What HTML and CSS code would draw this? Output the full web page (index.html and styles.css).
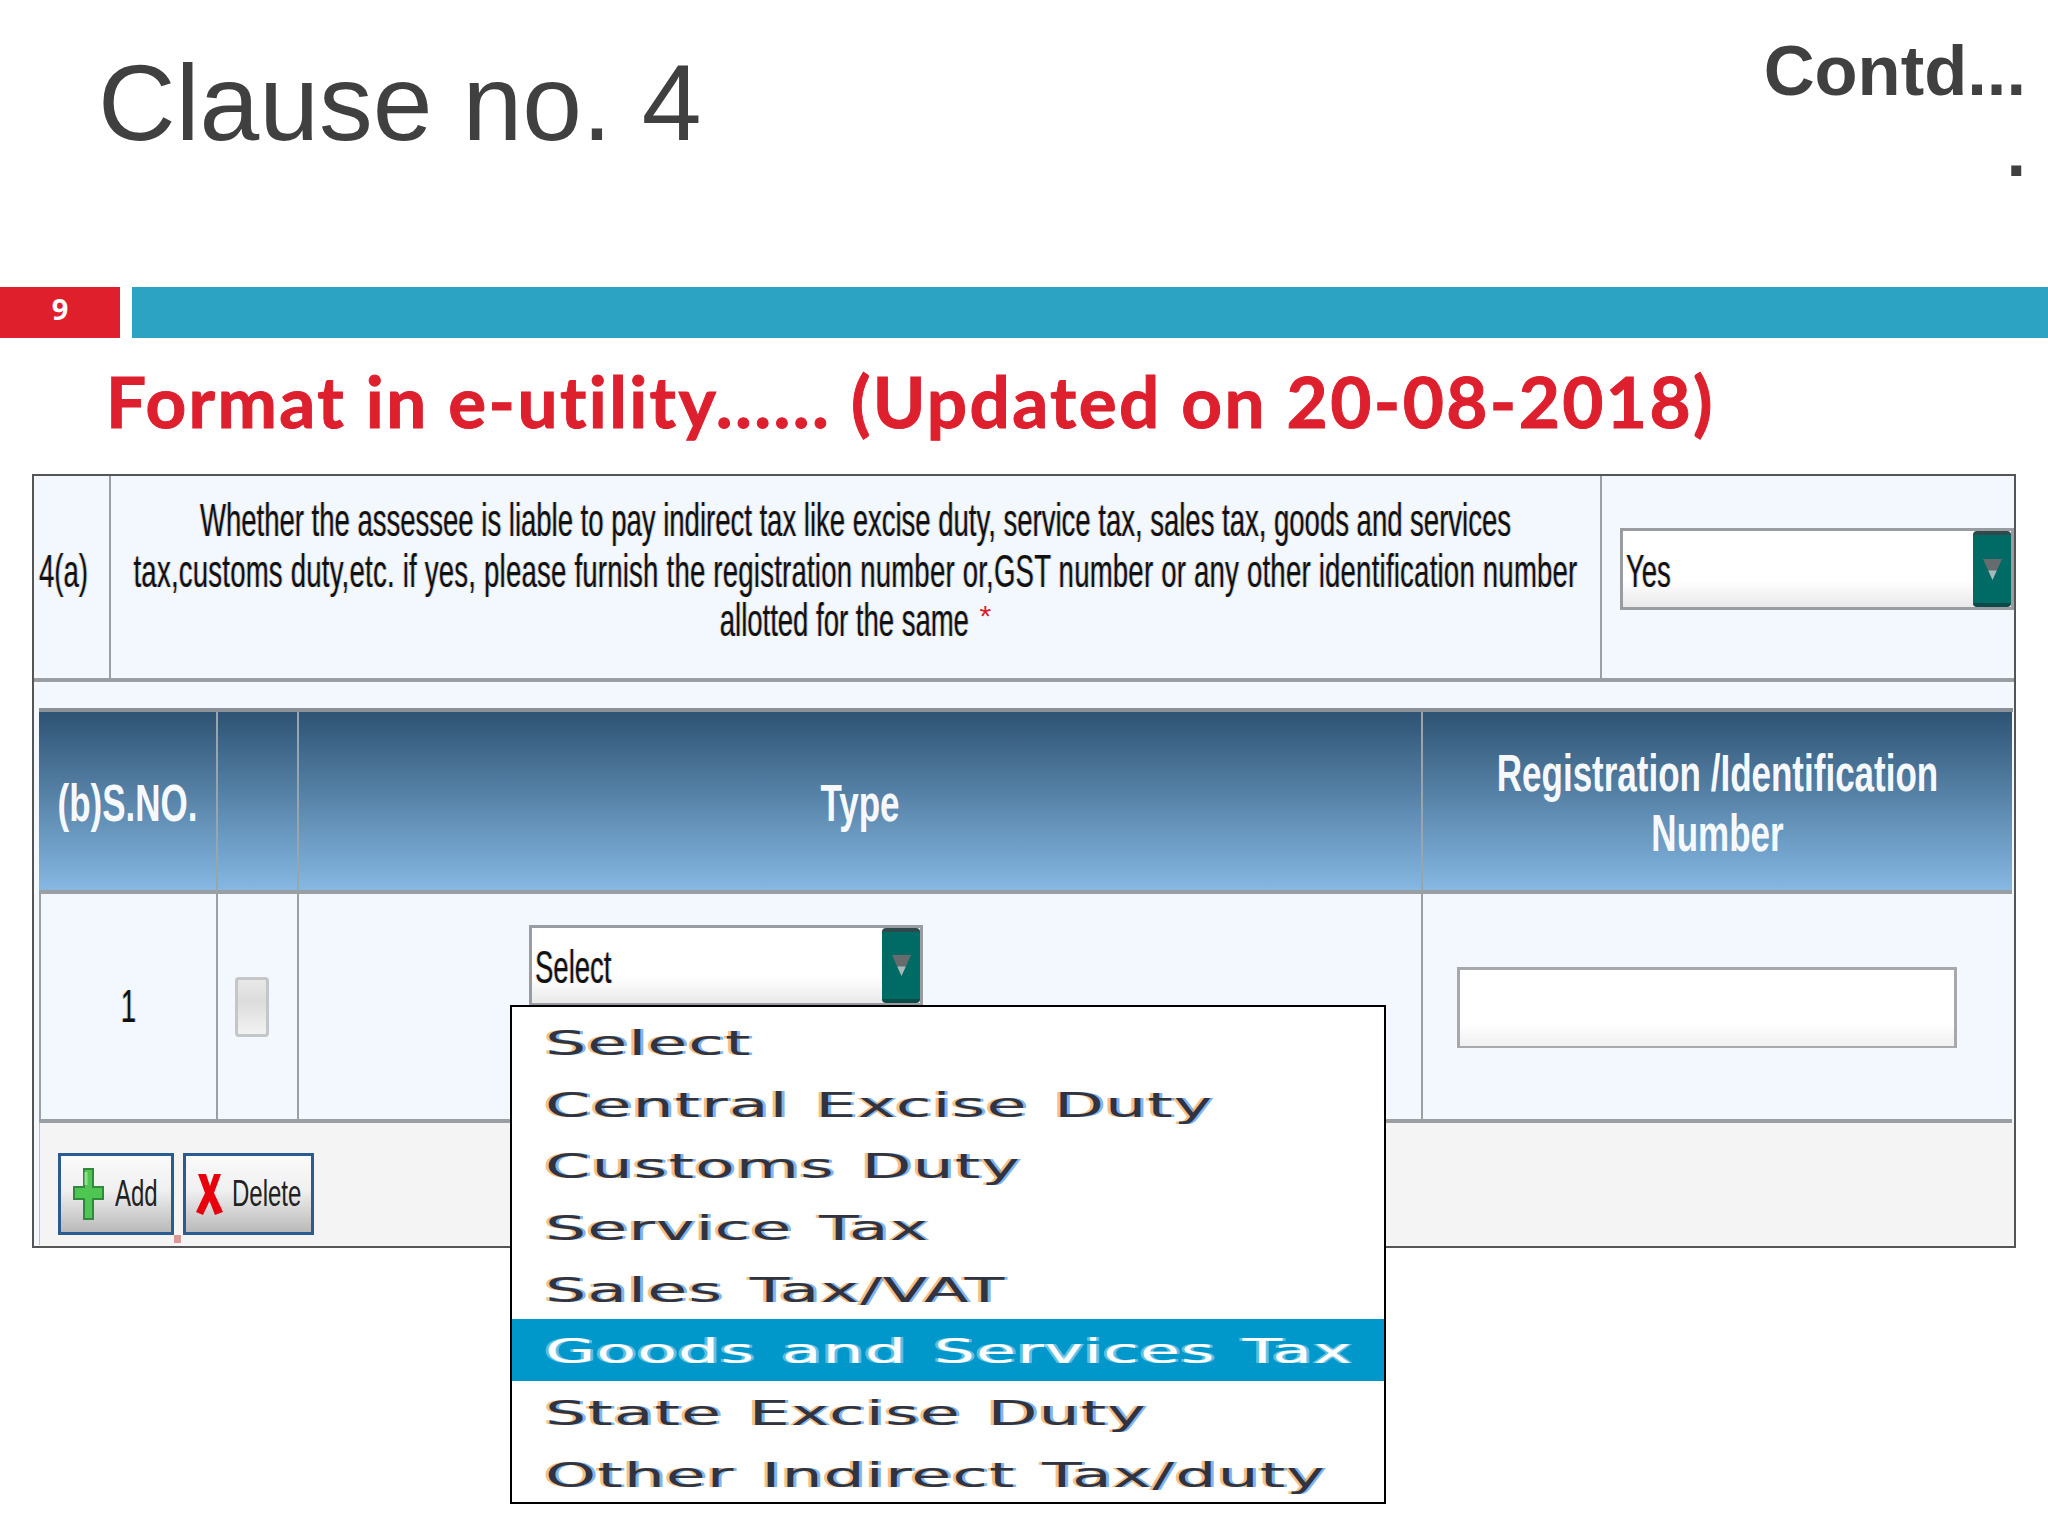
FILE: index.html
```html
<!DOCTYPE html>
<html lang="en">
<head>
<meta charset="utf-8">
<title>Clause no. 4</title>
<link rel="stylesheet" href="styles.css">
</head>
<body>
<header class="head">
  <h1 class="title">Clause no. 4</h1>
  <div class="contd">Contd...<br>.</div>
</header>
<div class="bar">
  <div class="num">9</div>
  <div class="band"></div>
</div>
<h2 class="sub">Format in e-utility...... (Updated on 20-08-2018)</h2>
<section class="form">
  <div class="row-a">
    <div class="cell-a cell-no"><span class="txt">4(a)</span></div>
    <div class="cell-a cell-q"><p class="txt question">Whether the assessee is liable to pay indirect tax like excise duty, service tax, sales tax, goods and services<br><span class="wide">tax,customs duty,etc. if yes, please furnish the registration number or,GST number or any other identification number</span><br>allotted for the same <sup class="req">*</sup></p></div>
    <div class="cell-a cell-sel">
      <div class="select select-yes">
        <span class="txt sel-label">Yes</span>
        <span class="arrow"><svg class="tri" viewBox="0 0 18 20"><path d="M0 0H18L9 20Z" fill="#666c6e"/><path d="M5 11H13L9 20Z" fill="#a5babc"/></svg></span>
      </div>
    </div>
  </div>
  <div class="gap"></div>
  <div class="grid">
    <div class="th"><span class="tht">(b)S.NO.</span></div>
    <div class="th"></div>
    <div class="th"><span class="tht">Type</span></div>
    <div class="th"><span class="tht">Registration /Identification<br>Number</span></div>
    <div class="td"><span class="txt">1</span></div>
    <div class="td"><span class="check"></span></div>
    <div class="td td-type">
      <div class="select">
        <span class="txt sel-label">Select</span>
        <span class="arrow"><svg class="tri" viewBox="0 0 18 20"><path d="M0 0H18L9 20Z" fill="#666c6e"/><path d="M5 11H13L9 20Z" fill="#a5babc"/></svg></span>
        <ul class="menu">
          <li class="opt"><span class="opt-t">Select</span></li>
          <li class="opt"><span class="opt-t">Central Excise Duty</span></li>
          <li class="opt"><span class="opt-t">Customs Duty</span></li>
          <li class="opt"><span class="opt-t">Service Tax</span></li>
          <li class="opt"><span class="opt-t">Sales Tax/VAT</span></li>
          <li class="opt opt-on"><span class="opt-t">Goods and Services Tax</span></li>
          <li class="opt"><span class="opt-t">State Excise Duty</span></li>
          <li class="opt"><span class="opt-t">Other Indirect Tax/duty</span></li>
        </ul>
      </div>
    </div>
    <div class="td"><span class="input"></span></div>
  </div>
  <div class="foot">
    <button class="btn btn-add">
      <svg class="ico-add" viewBox="0 0 31 52"><path d="M11 1H20V19H30V31H20V51H11V31H1V19H11Z" fill="#4fc552" stroke="#2f8a3c" stroke-width="2"/><path d="M13 4V17" stroke="#8fe08f" stroke-width="3"/></svg>
      <span class="btn-t">Add</span>
    </button>
    <button class="btn btn-del">
      <svg class="ico-del" viewBox="0 0 27 42"><path d="M2 1H10L14 13L18 1H25L18 20L27 39L19 42L13.500 28L7 42L0 39L9 20Z" fill="#e8000d"/></svg>
      <span class="btn-t">Delete</span>
    </button>
    <span class="mark"></span>
  </div>
</section>
</body>
</html>
```
FILE: styles.css
```css
* { box-sizing: border-box; }
html, body { margin: 0; padding: 0; background: #fff; }
body { width: 2048px; height: 1536px; overflow: hidden; font-family: "Liberation Sans", Arial, sans-serif; }

.head { height: 287px; display: flex; justify-content: space-between; align-items: flex-start; padding: 0 22px 0 98px; }
.title { margin: 41px 0 0; font-size: 107.500px; line-height: 125px; font-weight: 400; color: #404040; }
.contd { margin-top: 30px; font-size: 70.500px; line-height: 81px; font-weight: 700; color: #404040; text-align: right; }

.bar { display: flex; gap: 12px; height: 51px; }
.num { width: 120px; background: #e01f2d; color: #fff; font: 700 29px/44px "Open Sans", sans-serif; text-align: center; }
.band { flex: 1; background: #2ca3c2; }

.sub { height: 136px; margin: 0; padding: 18px 0 0 106px; font: 700 71px/90px Lato, sans-serif; letter-spacing: 2.400px; -webkit-text-stroke: 1px #dd1f2e; font-variant-ligatures: none; color: #dd1f2e; white-space: nowrap; }

.form { margin-left: 32px; width: 1984px; height: 774px; border: 2px solid #555; background: #f2f8fe; }
.row-a { display: grid; grid-template-columns: 75px 1491px 1fr; height: 206px; border-bottom: 4px solid #999fa4; }
.cell-a { display: flex; align-items: center; justify-content: center; padding-bottom: 13px; border-left: 2px solid #9aa0a4; }
.cell-a:first-child { border-left: 0; }
.cell-no { justify-content: flex-start; padding: 0 0 10px 5px; }
.cell-sel { align-items: flex-start; justify-content: flex-start; padding: 52px 0 0 18px; }

.txt { display: inline-block; margin: 0; font-size: 27.500px; color: #111; transform: scaleY(1.7); text-shadow: -1px 0 rgba(230,150,60,.35), 1px 0 rgba(60,120,220,.35); }
.question { line-height: 29.500px; text-align: center; white-space: nowrap; }
.wide { letter-spacing: .24px; }
.req { display: inline-block; margin-left: 3px; color: #d9202a; font-size: 30px; line-height: 0; vertical-align: 0; transform: translateY(-2px) scaleY(.588); text-shadow: none; }

.gap { height: 26px; }
.grid { display: grid; grid-template-columns: 177px 81px 1124px 591px; grid-template-rows: 182px 229px; margin: 0 1px 0 5px; border-top: 4px solid #8b9298; }
.th { display: flex; align-items: center; justify-content: center; padding-top: 4px; background: linear-gradient(#2e5373, #85b8e3); border-left: 2px solid #99a4ac; border-bottom: 4px solid #9a9fa3; }
.th:first-child { border-left: 0; }
.tht { display: inline-block; font-size: 35px; line-height: 40px; font-weight: 700; color: #f6f9fc; text-align: center; transform: scaleY(1.5); }
.td { display: flex; align-items: center; justify-content: center; border-left: 2px solid #9aa0a4; border-bottom: 4px solid #9a9fa3; }
.td:first-child { border-left: 0; }
.td-type { align-items: flex-start; justify-content: flex-start; padding: 31px 0 0 230px; }

.select { position: relative; display: flex; justify-content: space-between; width: 394px; height: 81px; border: 3px solid #999da1; background: linear-gradient(#fff 65%, #e9e9e9); }
.select-yes { height: 82px; }
.sel-label { align-self: center; margin: 5px 0 0 3px; transform-origin: left center; }
.arrow { display: flex; align-items: center; justify-content: center; width: 38px; background: #006a64; border-top: 4px solid #2f4a4c; border-bottom: 4px solid #0c4a48; border-radius: 4px; }
.tri { width: 19px; height: 23px; }

.check { width: 34px; height: 60px; margin-right: 11px; border: 3px solid #c4c6c8; border-radius: 4px; background: linear-gradient(#e8e8e8, #dcdcdc 40%, #f2f2f2); }
.input { width: 500px; height: 81px; margin: 1px 22px 0 0; border: 3px solid #a6a8aa; border-bottom-width: 2px; background: linear-gradient(#fff 70%, #f0f0f0); }

.menu { position: absolute; left: -22px; top: 77px; z-index: 5; width: 876px; height: 499px; margin: 0; padding: 4px 0 0; list-style: none; overflow: hidden; background: #fff; border: 2px solid #000; }
.opt { height: 61.700px; padding-left: 33px; white-space: nowrap; }
.opt-on { background: #0097cb; }
.opt-t { display: block; font: 400 65px/61.700px "DejaVu Sans", sans-serif; letter-spacing: 1px; word-spacing: 5px; color: #2f3440; transform: translateY(2px) scaleY(.52); transform-origin: left center; text-shadow: -3px 0 rgba(235,150,60,.6), 3px 0 rgba(50,130,220,.6); }
.opt-on .opt-t { color: #fff; text-shadow: -3px 0 rgba(255,255,255,.4), 3px 0 rgba(160,220,250,.6); }

.foot { position: relative; display: flex; gap: 9px; align-items: flex-start; height: 122px; padding: 30px 0 0 24px; background: linear-gradient(90deg, #f2f8fe 5px, #bcc0c4 5px, #bcc0c4 6px, #f4f4f4 6px); }
.btn { display: flex; align-items: center; height: 82px; padding: 0; border: 3px solid #2a5b91; background: linear-gradient(#fafafa, #f0f0f0 45%, #b9b9b9); }
.btn-add { width: 116px; padding-left: 12px; gap: 11px; }
.btn-del { width: 131px; padding-left: 10px; gap: 9px; }
.ico-add { width: 31px; height: 52px; }
.ico-del { width: 27px; height: 42px; }
.btn-t { display: inline-block; font-size: 24px; color: #222; transform: scaleY(1.5); }
.mark { position: absolute; left: 140px; top: 112px; width: 7px; height: 8px; background: #d99a98; }
```
